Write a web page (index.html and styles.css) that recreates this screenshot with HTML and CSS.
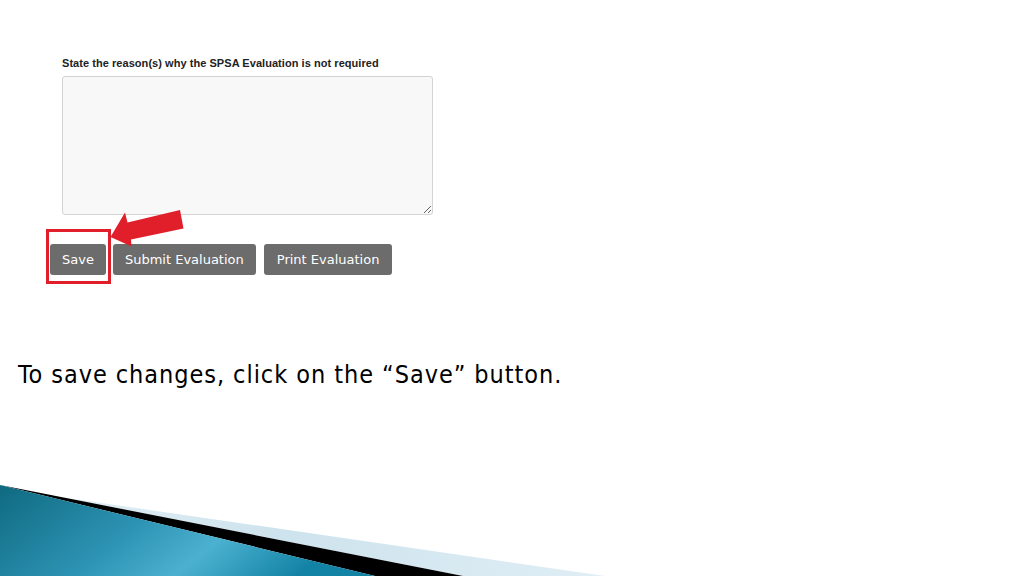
FILE: index.html
```html
<!DOCTYPE html>
<html>
<head>
<meta charset="utf-8">
<link rel="stylesheet" href="styles.css">
</head>
<body>
<div class="slide">
  <div class="form">
    <label class="field-label" for="reason">State the reason(s) why the SPSA Evaluation is not required</label>
    <textarea id="reason" class="reason"></textarea>
    <div class="actions">
      <button class="btn">Save</button>
      <button class="btn">Submit Evaluation</button>
      <button class="btn btn-print">Print Evaluation</button>
    </div>
    <div class="highlight"></div>
    <svg class="arrow" width="90" height="50" viewBox="105 205 90 50">
      <polygon points="110.5,237 125,212.5 127.5,222.5 180,210 183.5,228.5 131,239.5 131.5,246.5" fill="#e11f2a"/>
    </svg>
  </div>
  <p class="caption">To save changes, click on the “Save” button.</p>
  <svg class="swoosh" width="620" height="106" viewBox="0 470 620 106">
    <defs>
      <linearGradient id="teal" x1="0" y1="0" x2="1" y2="0.3">
        <stop offset="0" stop-color="#0f6a80"/>
        <stop offset="0.45" stop-color="#2d93b4"/>
        <stop offset="0.7" stop-color="#4cb1d0"/>
        <stop offset="1" stop-color="#1383a5"/>
      </linearGradient>
      <linearGradient id="pale" x1="0" y1="0" x2="1" y2="0">
        <stop offset="0" stop-color="#e3eff5"/>
        <stop offset="0.4" stop-color="#cde3ed"/>
        <stop offset="1" stop-color="#e0eef5"/>
      </linearGradient>
    </defs>
    <polygon points="60,497 605,576 463,576" fill="url(#pale)"/>
    <polygon points="0,485 463,576 375,576" fill="#000"/>
    <polygon points="0,485 375,576 0,576" fill="url(#teal)"/>
  </svg>
</div>
</body>
</html>
```

FILE: styles.css
```css
html, body {
  margin: 0;
  padding: 0;
  background: #fff;
}

.slide {
  position: relative;
  width: 1024px;
  height: 576px;
  overflow: hidden;
  padding: 57px 0 0 18px;
  box-sizing: border-box;
}

.form {
  position: relative;
  display: flex;
  flex-direction: column;
  align-items: flex-start;
  padding-left: 32px;
}

.field-label {
  margin-left: 12px;
  font-family: "Liberation Sans", Arial, sans-serif;
  font-weight: bold;
  font-size: 11px;
  line-height: 13px;
  letter-spacing: 0.05px;
  color: #222;
}

.reason {
  margin: 6px 0 0 12px;
  width: 371px;
  height: 139px;
  box-sizing: border-box;
  border: 1px solid #d3d3d3;
  border-radius: 3px;
  background: #f8f8f8;
  padding: 6px;
  font-family: "Liberation Sans", Arial, sans-serif;
}

.actions {
  display: flex;
  gap: 7px;
  margin-top: 29px;
}

.btn {
  height: 31px;
  padding: 0 12px;
  border: none;
  border-radius: 3px;
  background: #6c6c6c;
  color: #fff;
  font-family: "DejaVu Sans", Verdana, sans-serif;
  font-size: 13px;
  line-height: 31px;
}

.btn-print {
  margin-left: 1px;
  padding: 0 13px;
}

.highlight {
  position: absolute;
  left: 28px;
  top: 172px;
  width: 65px;
  height: 55px;
  box-sizing: border-box;
  border: 3px solid #e11f2a;
}

.arrow {
  position: absolute;
  left: 87px;
  top: 148px;
}

.caption {
  margin: 85px 0 0 0;
  font-family: "DejaVu Sans Condensed", "DejaVu Sans", sans-serif;
  font-stretch: condensed;
  font-size: 25px;
  line-height: 30px;
  letter-spacing: 0.95px;
  color: #000;
}

.swoosh {
  position: absolute;
  left: 0;
  bottom: 0;
}
```
